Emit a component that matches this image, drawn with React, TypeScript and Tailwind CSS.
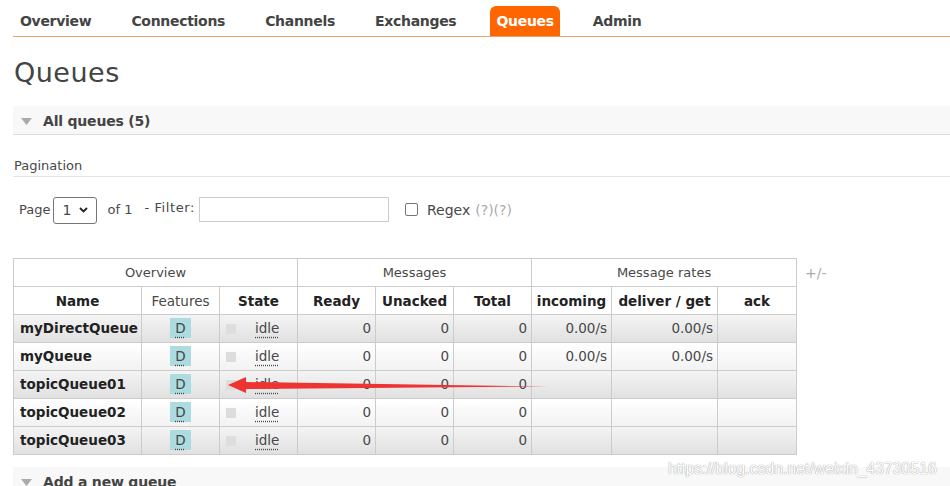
import React from "react";

const font = { fontFamily: '"DejaVu Sans", Verdana, sans-serif' };

const tabs = ["Overview", "Connections", "Channels", "Exchanges", "Queues", "Admin"];

const rows = [
  { name: "myDirectQueue", ready: 0, unacked: 0, total: 0, incoming: "0.00/s", deliver: "0.00/s" },
  { name: "myQueue", ready: 0, unacked: 0, total: 0, incoming: "0.00/s", deliver: "0.00/s" },
  { name: "topicQueue01", ready: 0, unacked: 0, total: 0, incoming: "", deliver: "" },
  { name: "topicQueue02", ready: 0, unacked: 0, total: 0, incoming: "", deliver: "" },
  { name: "topicQueue03", ready: 0, unacked: 0, total: 0, incoming: "", deliver: "" },
];

function Tri() {
  return (
    <svg width="11" height="7" viewBox="0 0 11 7" className="shrink-0">
      <path d="M0 0 L11 0 L5.5 7 Z" fill="#aaaaaa" />
    </svg>
  );
}

export default function App() {
  return (
    <div
      style={font}
      className="relative w-[950px] h-[486px] overflow-hidden bg-white text-[#484848]"
    >
      {/* nav */}
      <div className="ml-[13px] flex items-end h-[37px] border-b border-[#f0a060] pl-[7px]">
        {tabs.map((t) => (
          <div
            key={t}
            className={
              t === "Queues"
                ? "h-[30px] pt-[1px] px-[6px] mr-[33px] flex items-center rounded-t-[6px] bg-[#ff6600] text-white font-bold text-[14px] tracking-[-0.3px]"
                : t === "Exchanges"
                ? "h-[30px] pt-[1px] mr-[34px] flex items-center font-bold text-[14px] text-[#444] tracking-[-0.3px]"
                : "h-[30px] pt-[1px] mr-[40px] flex items-center font-bold text-[14px] text-[#444] tracking-[-0.3px]"
            }
          >
            {t}
          </div>
        ))}
      </div>

      <h1 className="ml-[14px] mt-[20px] text-[27px] leading-[32px] text-[#444] tracking-[0.5px]">Queues</h1>

      {/* all queues */}
      <div className="ml-[13px] mt-[17px] h-[29px] bg-[#f8f8f8] border-b border-[#dddddd] flex items-center gap-[11px] pl-[8px] pt-[2px]">
        <Tri />
        <span className="font-bold text-[14px] text-[#444] tracking-[-0.2px]">All queues (5)</span>
      </div>

      <div className="ml-[13px] mt-[21px] h-[21px] border-b border-[#e4e4e4] text-[13px] pl-[1px] leading-[20px]">
        Pagination
      </div>

      {/* pagination controls */}
      <div className="ml-[19px] mt-[19px] flex items-center text-[13px] h-[28px]">
        <span>Page</span>
        <div className="ml-[3px] w-[44px] h-[27px] border border-[#767676] rounded-[3px] flex items-center justify-between px-[8px]">
          <span className="text-[14px]">1</span>
          <svg width="9" height="6" viewBox="0 0 9 6">
            <path d="M1 1 L4.5 4.5 L8 1" stroke="#222" strokeWidth="1.8" fill="none" />
          </svg>
        </div>
        <span className="ml-[10px]">of 1</span>
        <span className="ml-[12px] -mt-[4px] tracking-[0.6px]">- Filter:</span>
        <div className="ml-[4px] -mt-[2px] w-[190px] h-[25px] border border-[#cccccc]" />
        <div className="ml-[16px] -mt-[2px] w-[13px] h-[13px] border border-[#767676] rounded-[2px]" />
        <span className="ml-[9px] text-[14px]">Regex</span>
        <span className="ml-[5px] text-[14px] text-[#aaaaaa]">(?)(?)</span>
      </div>

      {/* table */}
      <div className="ml-[13px] mt-[34px] flex items-start">
        <table className="border-collapse text-[13.5px] table-fixed w-[783px]">
          <colgroup>
            <col className="w-[128px]" />
            <col className="w-[78px]" />
            <col className="w-[78px]" />
            <col className="w-[78px]" />
            <col className="w-[78px]" />
            <col className="w-[78px]" />
            <col className="w-[80px]" />
            <col className="w-[106px]" />
            <col className="w-[79px]" />
          </colgroup>
          <thead>
            <tr className="h-[28px]">
              <th colSpan={3} className="border border-[#cccccc] font-normal text-[13px]">Overview</th>
              <th colSpan={3} className="border border-[#cccccc] font-normal text-[13px]">Messages</th>
              <th colSpan={3} className="border border-[#cccccc] font-normal text-[13px]">Message rates</th>
            </tr>
            <tr className="h-[28px] text-[#222]">
              <th className="border border-[#cccccc] font-bold pt-[2px]">Name</th>
              <th className="border border-[#cccccc] font-normal text-[#484848] pt-[2px]">Features</th>
              <th className="border border-[#cccccc] font-bold pt-[2px]">State</th>
              <th className="border border-[#cccccc] font-bold pt-[2px]">Ready</th>
              <th className="border border-[#cccccc] font-bold pt-[2px]">Unacked</th>
              <th className="border border-[#cccccc] font-bold pt-[2px]">Total</th>
              <th className="border border-[#cccccc] font-bold whitespace-nowrap pt-[2px]">incoming</th>
              <th className="border border-[#cccccc] font-bold whitespace-nowrap pt-[2px]">deliver / get</th>
              <th className="border border-[#cccccc] font-bold pt-[2px]">ack</th>
            </tr>
          </thead>
          <tbody>
            {rows.map((r, i) => (
              <tr
                key={r.name}
                className={
                  i % 2 === 0
                    ? "h-[28px] bg-linear-to-b from-[#f4f4f4] to-[#e0e0e0]"
                    : "h-[28px] bg-linear-to-b from-[#ffffff] to-[#f2f2f2]"
                }
              >
                <td className="border border-[#cccccc] px-[6px] font-bold text-[#222] whitespace-nowrap">{r.name}</td>
                <td className="border border-[#cccccc] text-center">
                  <span className="inline-block bg-[#acdce0] px-[5px] leading-[20px] text-[#444] underline decoration-dotted underline-offset-[3px]">
                    D
                  </span>
                </td>
                <td className="border border-[#cccccc]">
                  <div className="flex items-center pl-[6px]">
                    <span className="w-[10px] h-[10px] bg-[#dddddd] inline-block" />
                    <span className="ml-[19px] underline decoration-dotted underline-offset-[3px]">idle</span>
                  </div>
                </td>
                <td className="border border-[#cccccc] text-right pr-[4px]">{r.ready}</td>
                <td className="border border-[#cccccc] text-right pr-[4px]">{r.unacked}</td>
                <td className="border border-[#cccccc] text-right pr-[4px]">{r.total}</td>
                <td className="border border-[#cccccc] text-right pr-[4px]">{r.incoming}</td>
                <td className="border border-[#cccccc] text-right pr-[4px]">{r.deliver}</td>
                <td className="border border-[#cccccc]" />
              </tr>
            ))}
          </tbody>
        </table>
        <span className="ml-[8px] mt-[5px] text-[14px] text-[#aaaaaa]">+/-</span>
      </div>

      {/* add a new queue */}
      <div className="ml-[13px] mt-[12px] h-[29px] bg-[#f8f8f8] flex items-center gap-[11px] pl-[8px] pt-[2px]">
        <Tri />
        <span className="font-bold text-[14px] text-[#444] tracking-[-0.2px]">Add a new queue</span>
      </div>

      {/* annotation arrow */}
      <svg className="absolute left-0 top-0 pointer-events-none" width="950" height="486">
        <path d="M548 386.5 L246 389 L246 393 L228 385 L246 377 L246 382 Z" fill="#ee3333" />
      </svg>

      {/* watermark */}
      <div
        className="absolute left-[668px] top-[457px] text-[15.8px] text-white"
        style={{ fontFamily: '"Liberation Sans", Arial, sans-serif', textShadow: "0 0 1px #999999, 0 0 1px #bbbbbb" }}
      >
        https://blog.csdn.net/weixin_43730516
      </div>
    </div>
  );
}
